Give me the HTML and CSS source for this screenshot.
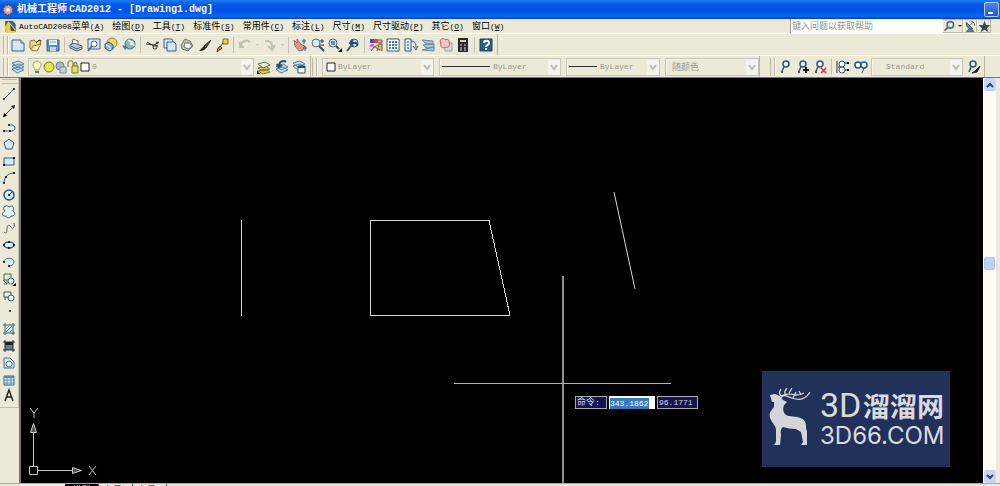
FILE: index.html
```html
<!DOCTYPE html>
<html lang="zh-CN">
<head>
<meta charset="utf-8">
<title>机械工程师CAD2012 - [Drawing1.dwg]</title>
<link rel="stylesheet" href="styles.css">
</head>
<body>
<svg class="sprite" aria-hidden="true">
  <symbol id="new" viewBox="0 0 16 16"><path d="M2 3h9l3 3v8H2z" fill="#d4e8f5" stroke="#3c6489"/><path d="M11 3v3h3" fill="#fff" stroke="#3c6489"/></symbol>
  <symbol id="open" viewBox="0 0 16 16"><path d="M2 4l4-1 2 2 5-2-1 5-7 6-3-3z" fill="#f3d47e" stroke="#967a38"/><path d="M5 9l8-2-4 7-6-1z" fill="#fff0b8" stroke="#967a38"/><path d="M8 6l3-3 2 1" fill="none" stroke="#333"/></symbol>
  <symbol id="save" viewBox="0 0 16 16"><path d="M2 3h12v11H2z" fill="#5e91c0" stroke="#356086"/><path d="M4 3h8v5H4z" fill="#eaf2fa"/><path d="M5 10h6v4H5z" fill="#c0d6e8"/><path d="M5 5h6" stroke="#8aa" /></symbol>
  <symbol id="print" viewBox="0 0 16 16"><path d="M4 7l1-5 5 2v3" fill="#fff" stroke="#586b80"/><path d="M2 8l4-2 8 3v3l-5 2-7-3z" fill="#b9c8dc" stroke="#495d78"/><path d="M3 9l6 3 4-2" fill="none" stroke="#495d78"/></symbol>
  <symbol id="preview" viewBox="0 0 16 16"><path d="M2 2h12v10H2z" fill="#d5e8f6" stroke="#3c6489"/><circle cx="8" cy="7" r="3" fill="#fff" stroke="#526d85"/><path d="M6 9l-4 5" stroke="#526d85" stroke-width="2"/></symbol>
  <symbol id="publish" viewBox="0 0 16 16"><circle cx="9" cy="6" r="5" fill="#f1d863" stroke="#9c8425"/><path d="M2 7l4-2 4 3v4l-4 2-4-3z" fill="#8eacd0" stroke="#395579"/><path d="M3 8l4 2v3" fill="none" stroke="#fff"/></symbol>
  <symbol id="globe" viewBox="0 0 16 16"><circle cx="9" cy="7" r="5" fill="#8bb8b0" stroke="#47717a"/><path d="M7 3c3 2 4 2 3 5M11 4l2 5" fill="none" stroke="#e5f2e5" stroke-width="2"/><path d="M1 8l6 2-3 3z" fill="#4e758e"/></symbol>
  <symbol id="cut" viewBox="0 0 16 16"><path d="M2 7l8 1 5-3M3 5l7 4h4" fill="none" stroke="#333"/><circle cx="11" cy="10" r="2" fill="none" stroke="#333"/><circle cx="13" cy="6" r="1" fill="none" stroke="#333"/></symbol>
  <symbol id="copy" viewBox="0 0 16 16"><path d="M2 2h8l1 2v7H2z" fill="#d4e8f5" stroke="#3c6489"/><path d="M5 5h7l2 2v7H5z" fill="#d4e8f5" stroke="#3c6489"/></symbol>
  <symbol id="paste" viewBox="0 0 16 16"><path d="M2 8l4-6 5 2 3 5-5 5-6-2z" fill="#bac4a9" stroke="#747b65"/><path d="M6 6l5 0 2 4-4 2-4-2z" fill="#fff" stroke="#627990"/></symbol>
  <symbol id="brush" viewBox="0 0 16 16"><path d="M14 3L7 9l2 2z" fill="#685d46" stroke="#393024"/><path d="M7 9l-5 5c4 0 6-1 7-3z" fill="#222"/></symbol>
  <symbol id="blockedit" viewBox="0 0 16 16"><path d="M9 2h5v5H9z" fill="#f3cf42" stroke="#77681e"/><path d="M9 6l-3 4M6 9l2 2-5 4 1-4z" fill="#b9972c" stroke="#4c401f"/></symbol>
  <symbol id="undo" viewBox="0 0 16 16"><path d="M3 5v5h4M4 9c0-5 6-7 9-4" fill="none" stroke="#c1c0b7" stroke-width="2"/></symbol>
  <symbol id="redo" viewBox="0 0 16 16"><path d="M3 4c4-1 8 2 7 7M6 9l4 4 3-5" fill="none" stroke="#c1c0b7" stroke-width="2"/></symbol>
  <symbol id="tiny" viewBox="0 0 6 16"><path d="M1 7h4L3 9z" fill="#b5b4aa"/></symbol>
  <symbol id="pan" viewBox="0 0 16 16"><path d="M2 3l3 3V2l3 4 2 2 3 1-2 4-4 1-4-5z" fill="#d9988e" stroke="#a56b68"/><path d="M12 2v5M10 4h4M11 11h4M13 9v5" stroke="#355878"/></symbol>
  <symbol id="zoom" viewBox="0 0 16 16"><circle cx="6" cy="6" r="4" fill="#d7edf4" stroke="#526d85"/><path d="M9 9l5 5" stroke="#3e4f61" stroke-width="2"/><path d="M12 2v4M10 4h4M10 8h4" stroke="#333"/></symbol>
  <symbol id="zoomwin" viewBox="0 0 16 16"><circle cx="6" cy="6" r="4" fill="#d7edf4" stroke="#526d85"/><path d="M9 9l3 3" stroke="#3e4f61" stroke-width="2"/><path d="M4 4h4v4H4z" fill="#648db9"/><path d="M15 11v4h-4z"/></symbol>
  <symbol id="zoomprev" viewBox="0 0 16 16"><circle cx="9" cy="6" r="4" fill="#b9d8ea" stroke="#305983"/><path d="M6 9l-4 5" stroke="#3e4f61" stroke-width="2"/><path d="M5 6h5c2 0 3 1 2 3M8 3L5 6l3 3" fill="none" stroke="#214f80" stroke-width="2"/></symbol>
  <symbol id="props" viewBox="0 0 16 16"><path d="M2 2h4v4H2z" fill="#3854b8"/><path d="M6 2h4v4H6z" fill="#e54343"/><path d="M2 7h4v3H2z" fill="#d870c8"/><path d="M10 3h4v3h-4M9 14l2-7h3v7M3 14l3-4 4-2M7 10l5 3" fill="#d3ba8a" stroke="#685f53"/></symbol>
  <symbol id="grid" viewBox="0 0 16 16"><path d="M2 2h12v12H2z" fill="#fff" stroke="#315b83"/><path d="M4 5h2M7 5h2M10 5h2M4 8h2M7 8h2M10 8h2M4 11h2M7 11h2M10 11h2" stroke="#4f799b" stroke-width="2"/></symbol>
  <symbol id="palette" viewBox="0 0 16 16"><path d="M2 2h6v12H2z" fill="#e5f1fa" stroke="#315b83"/><path d="M4 5h2M4 8h2M4 11h2" stroke="#315b83"/><path d="M8 4c4 0 5 2 5 7M10 9l3 4 2-4" fill="none" stroke="#365e82"/></symbol>
  <symbol id="sheets" viewBox="0 0 16 16"><path d="M2 3l11 1v3L5 6zM3 8l11-1v3L6 11zM2 13l12-3v4z" fill="#a9c4d4" stroke="#6b8aa0"/></symbol>
  <symbol id="markup" viewBox="0 0 16 16"><path d="M7 11v3h7V6h-3" fill="#dddcd7" stroke="#9a9da3"/><path d="M2 4c2-4 4-2 5-1 3-2 5 1 4 3 2 3-1 5-3 4-3 2-6 0-5-3z" fill="#f5c5ca" stroke="#ce5666"/></symbol>
  <symbol id="calc" viewBox="0 0 16 16"><path d="M3 1h10v14H3z" fill="#292929"/><path d="M5 3h6v2H5z" fill="#d3d3a0"/><path d="M5 8h2M9 8h2M5 11h2M9 11h2M5 13h2M9 13h2" stroke="#ddd"/></symbol>
  <symbol id="help" viewBox="0 0 16 16"><path d="M2 2h12v12H2z" fill="#265f8c" stroke="#174365"/><path d="M6 6c0-3 5-3 5 0 0 2-3 2-3 4M8 11v2" fill="none" stroke="#fff" stroke-width="2"/></symbol>
  <symbol id="layers" viewBox="0 0 16 16"><path d="M2 10l7-2 5 3-7 3zM2 7l7-2 5 3-7 3zM2 4l7-2 5 3-7 3z" fill="#c7dff1" stroke="#517fa7"/></symbol>
  <symbol id="layerobj" viewBox="0 0 16 16"><path d="M2 12l7-2 5 3-7 2zM2 9l7-2 5 3-7 2z" fill="#e3cb52" stroke="#84742a"/><path d="M2 5l7-2 5 3-7 3z" fill="#edf5d8" stroke="#55724a"/><path d="M1 11v4h3z" fill="#333"/></symbol>
  <symbol id="layerprev" viewBox="0 0 16 16"><path d="M2 10l7-2 5 3-7 3zM2 7l7-2 5 3-7 3z" fill="#c7dff1" stroke="#517fa7"/><path d="M5 7c0-5 5-6 7-4M3 5l2 3 3-2" fill="none" stroke="#264d75" stroke-width="2"/></symbol>
  <symbol id="layerstate" viewBox="0 0 16 16"><path d="M2 7l7-2 5 3-7 3zM2 4l7-2 5 3-7 3z" fill="#c7dff1" stroke="#517fa7"/><path d="M7 7h7v7H7z" fill="#fff" stroke="#244e76"/><path d="M7 8h7" stroke="#244e76" stroke-width="2"/></symbol>
  <symbol id="bulb" viewBox="0 0 12 16"><path d="M4 11c0-2-2-3-2-5 0-5 8-5 8 0 0 2-2 3-2 5z" fill="#fff8bb" stroke="#a3a06d"/><path d="M4 13h4" stroke="#777" stroke-width="2"/></symbol>
  <symbol id="sun" viewBox="0 0 12 16"><circle cx="6" cy="8" r="5" fill="#e8e84a" stroke="#7c7b35"/></symbol>
  <symbol id="gear" viewBox="0 0 12 16"><circle cx="5" cy="7" r="4" fill="#a6bccb" stroke="#6d8391"/><path d="M5 8h6v6H5z" fill="#c3d5df" stroke="#778e9b"/></symbol>
  <symbol id="lock" viewBox="0 0 12 16"><path d="M5 7h6v7H5z" fill="#e8e260" stroke="#77742b"/><path d="M1 8V4c0-3 5-3 5 0v3M7 7V4c1-2 3-1 3 3" fill="none" stroke="#77742b"/></symbol>
  <symbol id="square" viewBox="0 0 12 16"><path d="M2 4h8v8H2z" fill="#fff" stroke="#222"/></symbol>
  <symbol id="chev" viewBox="0 0 12 16"><path d="M3 6l3 4 3-4" fill="none" stroke="#bdbcb2" stroke-width="2"/></symbol>
  <symbol id="node" viewBox="0 0 16 16"><circle cx="9" cy="5" r="3" fill="#eaf5fd" stroke="#29577e" stroke-width="1.500"/><path d="M7 8l-2 4" stroke="#29577e" stroke-width="1.500"/><circle cx="5" cy="13" r="1" fill="#222"/></symbol>
  <symbol id="nodeadd" viewBox="0 0 16 16"><circle cx="8" cy="5" r="3" fill="#eaf5fd" stroke="#29577e" stroke-width="1.500"/><path d="M6 8l-2 4" stroke="#29577e" stroke-width="1.500"/><circle cx="4" cy="13" r="1" fill="#222"/><path d="M11 8v6M8 11h6" stroke="#111" stroke-width="2"/></symbol>
  <symbol id="nodedel" viewBox="0 0 16 16"><circle cx="8" cy="5" r="3" fill="#eaf5fd" stroke="#29577e" stroke-width="1.500"/><path d="M6 8l-2 4" stroke="#29577e" stroke-width="1.500"/><circle cx="4" cy="13" r="1" fill="#222"/><path d="M9 9l5 5M14 9l-5 5" stroke="#d33" stroke-width="1.500"/></symbol>
  <symbol id="nodealign" viewBox="0 0 16 16"><path d="M2 2v12" stroke="#333"/><circle cx="7" cy="5" r="3" fill="#fff" stroke="#29577e"/><circle cx="7" cy="11" r="3" fill="#fff" stroke="#29577e"/><path d="M3 8h2M10 4h4M10 11h4" stroke="#333"/><path d="M12 3h2v2h-2zM12 10h2v2h-2z"/></symbol>
  <symbol id="nodejoin" viewBox="0 0 16 16"><circle cx="5" cy="6" r="3" fill="#fff" stroke="#29577e" stroke-width="1.500"/><circle cx="11" cy="6" r="3" fill="#fff" stroke="#29577e" stroke-width="1.500"/><path d="M11 9l-2 5" stroke="#29577e"/></symbol>
  <symbol id="nodestyle" viewBox="0 0 16 16"><circle cx="8" cy="5" r="3" fill="#eaf5fd" stroke="#29577e" stroke-width="1.500"/><path d="M6 8l-2 5" stroke="#29577e" stroke-width="1.500"/><path d="M15 7l-5 5-3 2 5-1z" fill="#222" stroke="#222"/></symbol>
  <symbol id="line" viewBox="0 0 16 16"><path d="M3 13L13 3" stroke="#405561"/><circle cx="3" cy="13" r="1"/><circle cx="13" cy="3" r="1"/></symbol>
  <symbol id="xline" viewBox="0 0 16 16"><path d="M2 14L14 2" stroke="#333"/><path d="M2 14l1-4 3 3zM14 2l-1 4-3-3z"/></symbol>
  <symbol id="pline" viewBox="0 0 16 16"><path d="M3 11h8c4 0 4-6 0-6H9" fill="none" stroke="#3c617d"/><circle cx="3" cy="11" r="1"/><circle cx="8" cy="5" r="1"/><circle cx="9" cy="11" r="1"/></symbol>
  <symbol id="polygon" viewBox="0 0 16 16"><path d="M8 3l5 4-2 6H5L3 7z" fill="#d8e9f5" stroke="#435365"/></symbol>
  <symbol id="rect" viewBox="0 0 16 16"><path d="M3 5h10v7H3z" fill="#d8e9f5" stroke="#335c7c"/><path d="M2 12h2M12 5h2" stroke="#111" stroke-width="2"/></symbol>
  <symbol id="arc" viewBox="0 0 16 16"><path d="M3 13c0-6 4-10 10-10" fill="none" stroke="#335c7c"/><circle cx="3" cy="13" r="1"/><circle cx="5" cy="7" r="1"/><circle cx="13" cy="3" r="1"/></symbol>
  <symbol id="circle" viewBox="0 0 16 16"><circle cx="8" cy="8" r="5" fill="#d9edf8" stroke="#285779" stroke-width="1.500"/><path d="M8 8l3-3" stroke="#222"/><circle cx="8" cy="8" r="1"/></symbol>
  <symbol id="cloud" viewBox="0 0 16 16"><path d="M4 7c-4-4 2-7 4-4 3-3 6 1 4 4 4 3 0 6-2 5-1 3-5 2-5 0-5 1-4-4-1-5" fill="#e3eff6" stroke="#425b6b"/></symbol>
  <symbol id="spline" viewBox="0 0 16 16"><path d="M3 12c2 2 3 1 3-3s2-5 4-2 4 0 3-4" fill="none" stroke="#5a6063"/></symbol>
  <symbol id="ellipse" viewBox="0 0 16 16"><ellipse cx="8" cy="8" rx="5" ry="3" fill="#e0f0f5" stroke="#33627d" stroke-width="1.500"/><path d="M2 8h2M12 8h2M8 4v2M8 10v2" stroke="#222" stroke-width="2"/></symbol>
  <symbol id="earc" viewBox="0 0 16 16"><path d="M3 8c0-5 10-5 10 0 0 2-2 4-5 4" fill="#d9edf8" stroke="#48708b"/><circle cx="3" cy="8" r="1"/><circle cx="8" cy="12" r="1"/></symbol>
  <symbol id="insert" viewBox="0 0 16 16"><path d="M3 3h7v6H3z" fill="#e1edcc" stroke="#3f6c50"/><circle cx="10" cy="10" r="3" fill="#e5f2f6" stroke="#3f6c50"/><path d="M2 9l4 4M3 13h3v-3" fill="none" stroke="#3f6c50"/><path d="M15 12v3h-4z"/></symbol>
  <symbol id="block" viewBox="0 0 16 16"><path d="M3 4h7v5H3z" fill="#f4f5ec" stroke="#405d52"/><circle cx="10" cy="10" r="3" fill="#e5f2f6" stroke="#405d52"/><path d="M4 9v3" stroke="#405d52"/></symbol>
  <symbol id="point" viewBox="0 0 16 16"><path d="M8 6h2v2H8z" fill="#35536d"/></symbol>
  <symbol id="hatch" viewBox="0 0 16 16"><path d="M4 4h8v8H4z" fill="#d9ecf7"/><path d="M4 2v12M12 2v12M2 4h12M2 12h12" stroke="#36607d"/><path d="M5 8l3-3M5 11l6-6M8 12l4-4" stroke="#5c9ac1"/></symbol>
  <symbol id="gradient" viewBox="0 0 16 16"><path d="M4 4h8v8H4z" fill="#687983"/><path d="M4 6h8M4 5h8" stroke="#222" stroke-width="2"/><path d="M4 2v12M12 2v12M2 4h12M2 12h12" stroke="#252e36"/></symbol>
  <symbol id="region" viewBox="0 0 16 16"><path d="M3 3h6l4 4v6H3z" fill="#dcecf7" stroke="#38739b"/><circle cx="8" cy="9" r="3" fill="#fff" stroke="#38739b"/></symbol>
  <symbol id="table" viewBox="0 0 16 16"><path d="M3 4h10v9H3z" fill="#edf6fd" stroke="#316690"/><path d="M3 5h10" stroke="#598bb4" stroke-width="2"/><path d="M3 8h10M3 11h10M6 5v8M10 5v8" stroke="#598bb4"/></symbol>
  <symbol id="mtext" viewBox="0 0 16 16"><path d="M4 13L8 2l4 11M5 9h6" fill="none" stroke="#252525" stroke-width="1.500"/></symbol>
  <symbol id="mag" viewBox="0 0 16 16"><circle cx="9" cy="6" r="4" fill="#d5eaf7" stroke="#586d84" stroke-width="2"/><path d="M6 9l-4 4" stroke="#485a70" stroke-width="2"/></symbol>
  <symbol id="dish" viewBox="0 0 16 16"><path d="M3 3c-1 5 3 9 8 8zM6 11l-3 3h9l-3-3" fill="#768799" stroke="#34485d"/><path d="M7 7l4-4M9 2c3 0 4 2 4 5" fill="none" stroke="#34485d"/></symbol>
  <symbol id="star" viewBox="0 0 16 16"><path d="M8 1l2 5h5l-4 4 2 5-5-3-5 3 2-5-4-4h5z" fill="#35495f"/></symbol>
  <symbol id="up" viewBox="0 0 12 12"><path d="M3 8l3-3 3 3" fill="none" stroke="#29436e" stroke-width="2"/></symbol>
  <symbol id="down" viewBox="0 0 12 12"><path d="M3 4l3 3 3-3" fill="none" stroke="#29436e" stroke-width="2"/></symbol>
</svg>

<header class="titlebar">
  <svg class="app-icon" viewBox="0 0 14 14"><circle cx="7" cy="7" r="5" fill="#c9a5b4" stroke="#6b4560" stroke-width="2" stroke-dasharray="2 1"/><circle cx="7" cy="7" r="2" fill="#f5e5ea"/></svg>
  <h1 class="title">机械工程师<span class="title-latin">CAD2012 - [Drawing1.dwg]</span></h1>
  <button class="minimize" aria-label="最小化"></button>
</header>

<nav class="menubar">
  <svg class="doc-icon" viewBox="0 0 14 14"><path d="M2 1h8l3 3v9H2z" fill="#316da9" stroke="#244b70"/><path d="M1 8l4-7 8 9v4H2z" fill="#f3cd3d"/><path d="M7 5l6 7H8z" fill="#233d5f"/></svg>
  <button class="menu"><span class="latin">AutoCAD2008</span>菜单<span class="latin">(<u>A</u>)</span></button>
  <button class="menu">绘图<span class="latin">(<u>D</u>)</span></button>
  <button class="menu">工具<span class="latin">(<u>T</u>)</span></button>
  <button class="menu">标准件<span class="latin">(<u>S</u>)</span></button>
  <button class="menu">常用件<span class="latin">(<u>C</u>)</span></button>
  <button class="menu">标注<span class="latin">(<u>L</u>)</span></button>
  <button class="menu">尺寸<span class="latin">(<u>M</u>)</span></button>
  <button class="menu">尺寸驱动<span class="latin">(<u>P</u>)</span></button>
  <button class="menu">其它<span class="latin">(<u>O</u>)</span></button>
  <button class="menu">窗口<span class="latin">(<u>W</u>)</span></button>
  <div class="infocenter">
    <input class="ask" type="text" placeholder="键入问题以获取帮助" aria-label="键入问题以获取帮助">
    <button class="info-btn wide" aria-label="搜索"><svg class="icon small"><use href="#mag"/></svg><span class="caret"></span></button>
    <button class="info-btn" aria-label="通讯中心"><svg class="icon small"><use href="#dish"/></svg></button>
    <button class="info-btn" aria-label="收藏夹"><svg class="icon small"><use href="#star"/></svg></button>
  </div>
</nav>

<div class="dock">
  <div class="toolbar" role="toolbar" aria-label="标准">
    <span class="grip"></span>
    <div class="group three"><button class="tool" aria-label="新建"><svg class="icon"><use href="#new"/></svg></button><button class="tool" aria-label="打开"><svg class="icon"><use href="#open"/></svg></button><button class="tool" aria-label="保存"><svg class="icon"><use href="#save"/></svg></button></div>
    <span class="sep"></span>
    <div class="group four"><button class="tool" aria-label="打印"><svg class="icon"><use href="#print"/></svg></button><button class="tool" aria-label="打印预览"><svg class="icon"><use href="#preview"/></svg></button><button class="tool" aria-label="发布"><svg class="icon"><use href="#publish"/></svg></button><button class="tool" aria-label="网络发布"><svg class="icon"><use href="#globe"/></svg></button></div>
    <span class="sep"></span>
    <div class="group five"><button class="tool" aria-label="剪切"><svg class="icon"><use href="#cut"/></svg></button><button class="tool" aria-label="复制"><svg class="icon"><use href="#copy"/></svg></button><button class="tool" aria-label="粘贴"><svg class="icon"><use href="#paste"/></svg></button><button class="tool" aria-label="特性匹配"><svg class="icon"><use href="#brush"/></svg></button><button class="tool" aria-label="块编辑器"><svg class="icon"><use href="#blockedit"/></svg></button></div>
    <span class="sep"></span>
    <div class="group history"><button class="tool" aria-label="放弃"><svg class="icon"><use href="#undo"/></svg></button><svg class="tiny"><use href="#tiny"/></svg><button class="tool" aria-label="重做"><svg class="icon"><use href="#redo"/></svg></button><svg class="tiny"><use href="#tiny"/></svg></div>
    <span class="sep"></span>
    <div class="group four"><button class="tool" aria-label="平移"><svg class="icon"><use href="#pan"/></svg></button><button class="tool" aria-label="缩放"><svg class="icon"><use href="#zoom"/></svg></button><button class="tool" aria-label="窗口缩放"><svg class="icon"><use href="#zoomwin"/></svg></button><button class="tool" aria-label="缩放上一个"><svg class="icon"><use href="#zoomprev"/></svg></button></div>
    <span class="sep"></span>
    <div class="group six"><button class="tool" aria-label="特性"><svg class="icon"><use href="#props"/></svg></button><button class="tool" aria-label="设计中心"><svg class="icon"><use href="#grid"/></svg></button><button class="tool" aria-label="工具选项板"><svg class="icon"><use href="#palette"/></svg></button><button class="tool" aria-label="图纸集"><svg class="icon"><use href="#sheets"/></svg></button><button class="tool" aria-label="标记集"><svg class="icon"><use href="#markup"/></svg></button><button class="tool" aria-label="计算器"><svg class="icon"><use href="#calc"/></svg></button></div>
    <span class="sep"></span>
    <button class="tool" aria-label="帮助"><svg class="icon"><use href="#help"/></svg></button>
  </div>
</div>

<div class="dock lower">
  <div class="toolbar" role="toolbar" aria-label="图层">
    <span class="grip"></span>
    <button class="tool" aria-label="图层特性"><svg class="icon"><use href="#layers"/></svg></button>
    <div class="combo layer-combo">
      <svg class="mark"><use href="#bulb"/></svg><svg class="mark"><use href="#sun"/></svg><svg class="mark"><use href="#gear"/></svg><svg class="mark"><use href="#lock"/></svg><svg class="mark"><use href="#square"/></svg>
      <select class="select latin" aria-label="图层" disabled><option>0</option></select><svg class="drop"><use href="#chev"/></svg>
    </div>
    <div class="group three"><button class="tool" aria-label="置为当前"><svg class="icon"><use href="#layerobj"/></svg></button><button class="tool" aria-label="上一个图层"><svg class="icon"><use href="#layerprev"/></svg></button><button class="tool" aria-label="图层状态"><svg class="icon"><use href="#layerstate"/></svg></button></div>
  </div>
  <div class="toolbar props" role="toolbar" aria-label="特性">
    <span class="grip"></span>
    <div class="combo color-combo"><svg class="mark"><use href="#square"/></svg><select class="select latin" aria-label="颜色" disabled><option>ByLayer</option></select><svg class="drop"><use href="#chev"/></svg></div>
    <div class="combo type-combo"><span class="sample long"></span><select class="select latin" aria-label="线型" disabled><option>ByLayer</option></select><svg class="drop"><use href="#chev"/></svg></div>
    <div class="combo weight-combo"><span class="sample"></span><select class="select latin" aria-label="线宽" disabled><option>ByLayer</option></select><svg class="drop"><use href="#chev"/></svg></div>
    <div class="combo weight-combo"><select class="select" aria-label="打印样式" disabled><option>随颜色</option></select><svg class="drop"><use href="#chev"/></svg></div>
  </div>
  <div class="toolbar leader" role="toolbar" aria-label="多重引线">
    <span class="grip"></span>
    <div class="group three"><button class="tool" aria-label="引线"><svg class="icon"><use href="#node"/></svg></button><button class="tool" aria-label="添加引线"><svg class="icon"><use href="#nodeadd"/></svg></button><button class="tool" aria-label="删除引线"><svg class="icon"><use href="#nodedel"/></svg></button></div>
    <span class="sep"></span>
    <button class="tool" aria-label="对齐引线"><svg class="icon"><use href="#nodealign"/></svg></button><button class="tool" aria-label="合并引线"><svg class="icon"><use href="#nodejoin"/></svg></button>
    <div class="combo style-combo"><select class="select latin" aria-label="引线样式" disabled><option>Standard</option></select><svg class="drop"><use href="#chev"/></svg></div>
    <button class="tool" aria-label="样式管理"><svg class="icon"><use href="#nodestyle"/></svg></button>
  </div>
</div>

<main class="workspace">
  <aside class="sidebar">
    <div class="palette" role="toolbar" aria-label="绘图">
      <span class="grip-h"></span>
      <button class="draw" aria-label="直线"><svg class="icon"><use href="#line"/></svg></button>
      <button class="draw" aria-label="构造线"><svg class="icon"><use href="#xline"/></svg></button>
      <button class="draw" aria-label="多段线"><svg class="icon"><use href="#pline"/></svg></button>
      <button class="draw" aria-label="正多边形"><svg class="icon"><use href="#polygon"/></svg></button>
      <button class="draw" aria-label="矩形"><svg class="icon"><use href="#rect"/></svg></button>
      <button class="draw" aria-label="圆弧"><svg class="icon"><use href="#arc"/></svg></button>
      <button class="draw" aria-label="圆"><svg class="icon"><use href="#circle"/></svg></button>
      <button class="draw" aria-label="修订云线"><svg class="icon"><use href="#cloud"/></svg></button>
      <button class="draw" aria-label="样条曲线"><svg class="icon"><use href="#spline"/></svg></button>
      <button class="draw" aria-label="椭圆"><svg class="icon"><use href="#ellipse"/></svg></button>
      <button class="draw" aria-label="椭圆弧"><svg class="icon"><use href="#earc"/></svg></button>
      <button class="draw" aria-label="插入块"><svg class="icon"><use href="#insert"/></svg></button>
      <button class="draw" aria-label="创建块"><svg class="icon"><use href="#block"/></svg></button>
      <button class="draw" aria-label="点"><svg class="icon"><use href="#point"/></svg></button>
      <button class="draw" aria-label="图案填充"><svg class="icon"><use href="#hatch"/></svg></button>
      <button class="draw" aria-label="渐变色"><svg class="icon"><use href="#gradient"/></svg></button>
      <button class="draw" aria-label="面域"><svg class="icon"><use href="#region"/></svg></button>
      <button class="draw" aria-label="表格"><svg class="icon"><use href="#table"/></svg></button>
      <button class="draw" aria-label="多行文字"><svg class="icon"><use href="#mtext"/></svg></button>
    </div>
  </aside>

  <section class="canvas" aria-label="绘图区">
    <svg class="drawing">
      <g transform="translate(-21 -78)" fill="none" stroke="#d8d8d8" shape-rendering="crispEdges">
        <path d="M241 220V316"/>
        <path d="M370.500 220.500H489L510 315.500H370.500z"/>
        <path d="M614 192L635 289" shape-rendering="auto"/>
        <path d="M563 276V483" stroke="#8f8f8b" stroke-width="2"/>
        <path d="M454 383.500H671" stroke="#b5b5ae"/>
      </g>
    </svg>
    <svg class="ucs" viewBox="0 0 74 74" fill="none" stroke="#c8c8c8">
      <path d="M4.500 60.500h8v8h-8zM8.500 60V18M13 64.500h39"/>
      <path d="M5.500 26.500h6l-3-9zM47.500 61.500v6l9-3z" fill="#555"/>
      <path d="M5 2l4 5 4-5M9 7v5M64 60l7 9M71 60l-7 9"/>
    </svg>
    <div class="prompt">
      <label class="prompt-label" for="coord-x">命令<span class="latin">:</span></label>
      <div class="prompt-x"><input class="coord picked" id="coord-x" value="343.1862"></div>
      <input class="coord" value="96.1771" aria-label="Y">
    </div>
    <div class="watermark">
      <svg class="deer" viewBox="0 0 44 60" fill="#d3d5d9">
        <path d="M1 7l5-1 5 2 3 4 4 2-3 3c-2 6 0 10 5 11l8 1c6 1 9 4 9 9 0 2 0 3 1 5v14h-6l2-3-2-10-5-3c-5 0-9-1-13-2-2 2-3 4-2 8l-1 10H5l2-3V42c0-4-3-6-5-10-3-6-1-8 3-13V14H3z"/>
        <path d="M12 10c2-4 5-2 11 0 8 3 14 1 18-6M12 8c5-3 10-2 15-1 4 0 6-1 8-2M12 8c-3-3-1-5 0-7M16 6c-1-3 1-4 2-6M20 5l3-5M24 10l3-6M32 7l-2-4" fill="none" stroke="#d3d5d9" stroke-width="1.300"/>
      </svg>
      <div class="brand"><div class="brand-name"><span>3D</span><span class="brand-cjk">溜溜网</span></div><div class="brand-url">3D66.COM</div></div>
    </div>
  </section>

  <div class="scrollbar">
    <button class="arrow" aria-label="向上滚动"><svg class="arrow-icon"><use href="#up"/></svg></button>
    <div class="track"><span class="thumb"></span></div>
    <button class="arrow" aria-label="向下滚动"><svg class="arrow-icon"><use href="#down"/></svg></button>
  </div>
</main>

<footer class="tabs">
  <div class="tab-nav"></div>
  <button class="tab current">模型</button>
  <button class="tab">布局1</button>
  <button class="tab">布局2</button>
</footer>
</body>
</html>
```
FILE: styles.css
```css
* { box-sizing: border-box; }
html { height: 100%; }
body {
  display: flex;
  flex-direction: column;
  height: 100%;
  margin: 0;
  overflow: hidden;
  background: #ece9d8;
  color: #222;
  font: 9px/12px "Liberation Sans", "Noto Sans CJK SC", sans-serif;
}
button, input, select {
  margin: 0;
  padding: 0;
  border: 0;
  border-radius: 0;
  background: none;
  color: inherit;
  font: inherit;
}
svg { display: block; flex: none; }
.sprite { position: absolute; width: 0; height: 0; }
.latin { font-family: "Liberation Mono", "Noto Sans CJK SC", monospace; font-size: 8px; }
.icon { width: 16px; height: 16px; }
.icon.small { width: 13px; height: 13px; }

.titlebar {
  display: flex;
  flex: none;
  align-items: center;
  height: 19px;
  padding-left: 1px;
  background: linear-gradient(#1c7df5, #0457e5 25%, #0353e4 60%, #0568fb 85%, #0340b5);
  color: #fff;
}
.app-icon { width: 14px; height: 14px; margin-right: 2px; }
.title {
  flex: 1;
  margin: 0;
  font: bold 10px/16px "Liberation Sans", "Noto Sans CJK SC", sans-serif;
}
.title-latin { padding-left: 2px; font-family: "Liberation Mono", monospace; }
.minimize {
  width: 15px;
  height: 15px;
  margin-right: 1px;
  border: 1px solid #b7cbf5;
  border-radius: 2px;
  background: linear-gradient(#4e83ef, #2459d0);
}
.minimize::after { content: ""; display: block; width: 5px; height: 2px; margin: 7px 0 0 3px; background: #fff; }

.menubar {
  display: flex;
  flex: none;
  align-items: center;
  gap: 8px;
  height: 15px;
  padding: 0 9px 0 4px;
  border-bottom: 1px solid #fff;
}
.doc-icon { width: 12px; height: 13px; margin-right: -5px; }
.menu { white-space: nowrap; line-height: 13px; color: #000; }
.infocenter { display: flex; height: 14px; margin-left: auto; }
.ask { width: 152px; padding-left: 1px; border-left: 1px solid #999; background: #fff; }
.ask::placeholder { color: #929292; opacity: 1; }
.info-btn {
  display: flex;
  align-items: center;
  justify-content: center;
  width: 14px;
  border: 1px solid #bbb8a8;
  border-left-color: #fff;
}
.info-btn.wide { width: 21px; gap: 2px; }
.caret { border: 2px solid transparent; border-top-color: #333; border-bottom: 0; }

.dock { display: flex; flex: none; height: 22px; border-bottom: 1px solid #fff; }
.dock.lower { border-bottom-color: #76746b; }
.toolbar {
  display: flex;
  align-items: center;
  gap: 2px;
  padding: 0 3px;
  border-right: 1px solid #b8b5a5;
}
.grip {
  width: 5px;
  height: 18px;
  border: 1px solid #bdbaab;
  border-width: 0 1px;
  box-shadow: 1px 0 #fff;
}
.tool { flex: none; width: 16px; height: 16px; }
.group { display: flex; flex: none; justify-content: space-between; }
.history { width: 48px; }
.three { width: 51px; }
.four { width: 69px; }
.five { width: 86px; }
.six { width: 103px; }
.sep { width: 1px; height: 16px; margin: 0 1px; background: #c5c2b3; }
.tiny { width: 5px; height: 16px; }

.combo {
  display: flex;
  align-items: center;
  height: 18px;
  padding-left: 2px;
  border: 1px solid #c9c6b7;
  box-shadow: inset 1px 1px #f5f3e9;
  color: #9b998d;
}
.mark { width: 12px; height: 16px; }
.select { flex: 1; min-width: 0; padding-left: 1px; appearance: none; opacity: 1; }
.drop { width: 12px; height: 16px; background: #f5f3ed; }
.sample { flex: none; width: 28px; height: 1px; margin-right: 2px; background: #333; }
.sample.long { width: 48px; }
.layer-combo { width: 226px; }
.props { gap: 5px; margin-left: 1px; padding: 0; }
.color-combo { width: 112px; }
.type-combo { width: 122px; }
.weight-combo { width: 94px; }
.weight-combo .select:first-child { padding-left: 4px; }
.leader { margin-left: auto; margin-right: 15px; }
.style-combo { width: 92px; }
.style-combo .select { padding-left: 12px; }

.workspace { display: flex; flex: 1; min-height: 0; }
.sidebar { flex: none; width: 21px; border-right: 2px solid #77756b; }
.palette {
  display: flex;
  flex-direction: column;
  align-items: center;
  padding-bottom: 3px;
  border: 1px solid #c5c2b3;
  border-width: 0 1px 1px 0;
}
.grip-h { width: 15px; height: 5px; margin: 1px 0; border: 1px solid #bdbaab; border-width: 1px 0; }
.draw { display: grid; place-items: center; width: 17px; height: 17px; }
.draw:nth-child(5n) { height: 16px; }

.canvas { position: relative; flex: 1; min-width: 0; overflow: hidden; background: #000; }
.drawing { width: 100%; height: 100%; }
.ucs { position: absolute; left: 4px; bottom: 3px; width: 74px; height: 74px; }
.prompt {
  position: absolute;
  left: 554px;
  top: 318px;
  display: flex;
  gap: 2px;
  color: #d5d5e8;
}
.prompt-label { width: 32px; height: 13px; padding-left: 1px; border: 1px solid #aaa; background: #161350; line-height: 11px; }
.prompt-x { width: 46px; height: 13px; padding: 1px; background: #fff; }
.coord {
  width: 41px;
  height: 13px;
  padding-left: 1px;
  border: 1px solid #aaa;
  background: #161350;
  font: 8px/11px "Liberation Mono", monospace;
}
.coord.picked { width: 39px; height: 11px; padding: 0; border: 0; background: #3979bd; color: #fff; }
.watermark {
  position: absolute;
  right: 33px;
  bottom: 16px;
  display: flex;
  gap: 7px;
  padding: 17px 6px 19px 7px;
  background: #22315a;
  color: #d9dbe0;
  white-space: nowrap;
}
.deer { width: 44px; height: 60px; }
.brand { display: flex; flex-direction: column; width: 124px; }
.brand-name { display: flex; align-items: center; justify-content: space-between; height: 35px; font: 34px/35px Roboto, sans-serif; }
.brand-cjk { font: bold 27px/35px "Noto Sans CJK SC", sans-serif; }
.brand-url { font: 24px/25px Inter, sans-serif; }

.scrollbar {
  display: flex;
  flex: none;
  flex-direction: column;
  align-items: center;
  width: 13px;
  margin-right: 4px;
  background: #fcfbf5;
}
.arrow { width: 12px; height: 13px; border-radius: 2px; background: #c5d6f8; }
.arrow-icon { width: 12px; height: 12px; }
.track { flex: 1; padding-top: 166px; }
.thumb { display: block; width: 11px; height: 13px; border: 1px solid #b1c5ea; border-radius: 2px; background: #bdd0f5; }

.tabs { display: flex; flex: none; height: 3px; padding-left: 21px; overflow: hidden; border-top: 1px solid #aaa79b; }
.tab-nav { width: 44px; background: #f6f4ea; }
.tab { width: 34px; height: 12px; border-right: 1px solid #555; line-height: 10px; }
.tab.current { background: #000; color: #fff; }
```
